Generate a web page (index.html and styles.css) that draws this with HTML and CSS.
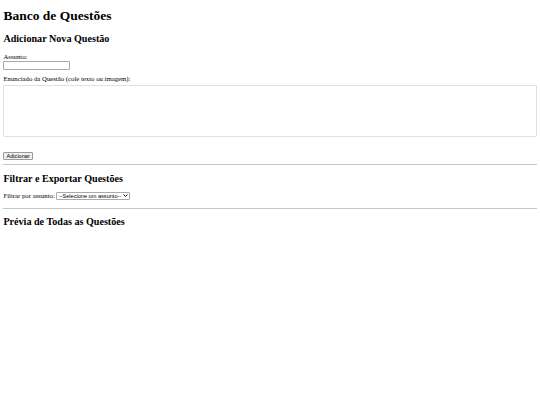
FILE: index.html
```html
<!DOCTYPE html>
<html lang="pt-BR">
  <head>
    <meta charset="UTF-8" />
    <meta name="viewport" content="width=device-width, initial-scale=1.0" />
    <title>Banco de Questões</title>
    <link rel="stylesheet" href="styles.css">
  </head>
  <body>
    <h1 class="title">Banco de Questões</h1>

    <h2 class="section-title first">Adicionar Nova Questão</h2>
    <form class="form" id="form">
      <div class="field">
        <label for="assunto">Assunto:</label>
        <input type="text" id="assunto" class="input" />
      </div>
      <div class="field field-wide">
        <label for="enunciado">Enunciado da Questão (cole texto ou imagem):</label>
        <div class="editor" id="enunciado" contenteditable="true"></div>
      </div>
      <button type="button" class="btn">Adicionar</button>
    </form>

    <hr class="divider" />

    <h2 class="section-title">Filtrar e Exportar Questões</h2>
    <div class="filter">
      <label for="filtro">Filtrar por assunto:</label>
      <div class="select-wrap">
        <select id="filtro" class="select">
          <option>--Selecione um assunto--</option>
        </select>
        <svg class="chevron" width="5" height="3" viewBox="0 0 10 6">
          <path d="M1 1l4 4 4-4" fill="none" stroke="#000" stroke-width="2" />
        </svg>
      </div>
    </div>

    <hr class="divider" />

    <h2 class="section-title">Prévia de Todas as Questões</h2>
    <div class="preview" id="preview"></div>
  </body>
</html>
```

FILE: styles.css
```css
body {
  margin: 0 3.4px;
  font-family: "Liberation Serif", "Times New Roman", serif;
  font-size: 6.75px;
  line-height: 8px;
  color: #000;
  background: #fff;
}

.title {
  font-size: 13.5px;
  line-height: 16px;
  margin: 8.4px 0 0;
}

.section-title {
  font-size: 10.125px;
  line-height: 12px;
  margin: 6.6px 0 0;
}

.section-title.first {
  margin-top: 8.9px;
}

.form {
  margin-top: 7.4px;
}

.field {
  display: flex;
  flex-direction: column;
  align-items: flex-start;
}

.field-wide {
  margin-top: 5.4px;
}

.field-wide label {
  margin-bottom: 1.6px;
}

.input {
  box-sizing: border-box;
  width: 67px;
  height: 9px;
  margin: 0 0 0 -0.4px;
  padding: 0 1px;
  border: 1px solid #a9a9a9;
  border-radius: 1px;
  font-size: 5.6px;
}

.editor {
  box-sizing: border-box;
  width: 534px;
  height: 52px;
  margin-left: -0.4px;
  border: 1px solid #e0e0e0;
  border-radius: 1px;
}

.btn {
  display: block;
  box-sizing: border-box;
  height: 8px;
  margin: 15px 0 0 -0.4px;
  padding: 0 2.5px;
  font-family: "Liberation Sans", Arial, sans-serif;
  font-size: 5.6px;
  line-height: 6px;
  color: #000;
  background: #efefef;
  border: 1px solid #9a9a9a;
  border-radius: 1px;
}

.divider {
  margin: 4.5px 0 0;
  border: none;
  border-top: 1px solid #c4c4c4;
}

.divider + .section-title {
  margin-top: 7.6px;
}

.filter {
  display: flex;
  align-items: center;
  gap: 1.5px;
  margin-top: 7px;
}

.select-wrap {
  position: relative;
  display: flex;
}

.select {
  appearance: none;
  -webkit-appearance: none;
  box-sizing: border-box;
  width: 74px;
  height: 8px;
  padding: 0 8px 0 1.5px;
  font-family: "Liberation Sans", Arial, sans-serif;
  font-size: 5.6px;
  line-height: 6px;
  color: #000;
  background: #fff;
  border: 1px solid #a9a9a9;
  border-radius: 1px;
}

.chevron {
  position: absolute;
  right: 2.5px;
  top: 2.5px;
  pointer-events: none;
}

.filter + .divider {
  margin-top: 8px;
}
```
